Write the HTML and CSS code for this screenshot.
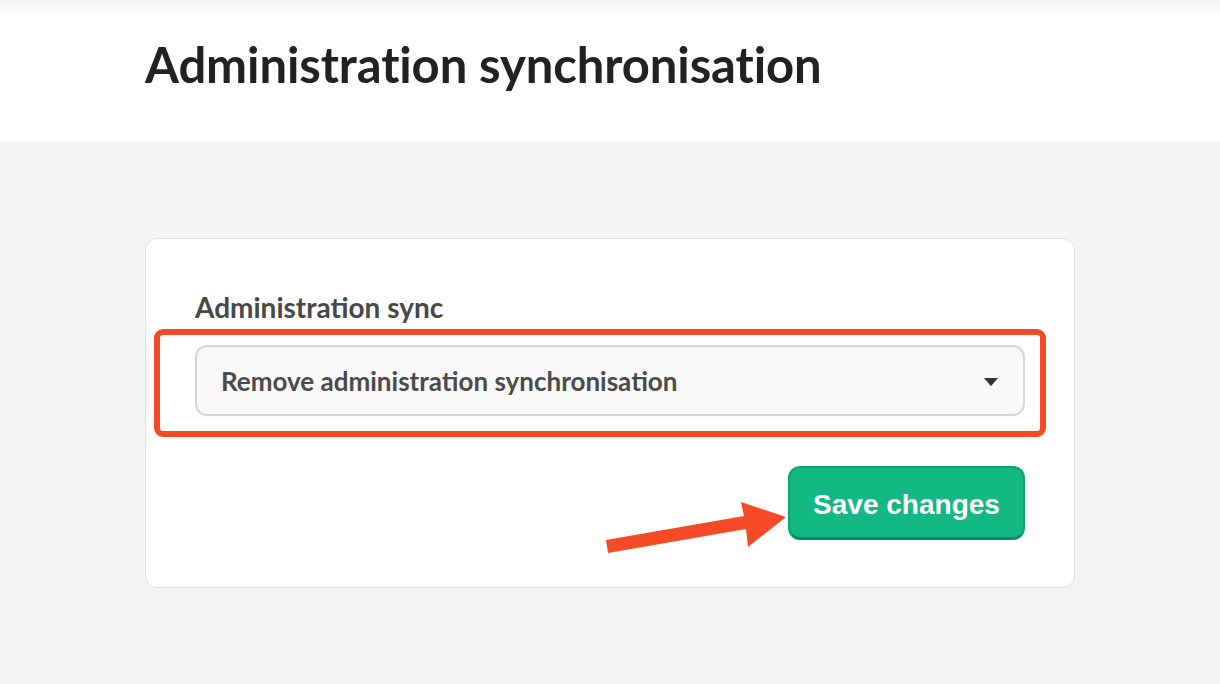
FILE: index.html
```html
<!DOCTYPE html>
<html>
<head>
<meta charset="utf-8">
<link rel="stylesheet" href="styles.css">
</head>
<body>
<header class="top">
  <h1 class="title">Administration synchronisation</h1>
</header>
<main class="main">
  <section class="card">
    <label class="label">Administration sync</label>
    <div class="select-wrap">
      <div class="select">
        <span class="select-text">Remove administration synchronisation</span>
        <svg class="caret" width="16" height="10" viewBox="0 0 16 10"><path d="M1 1 H15 L8.6 8.4 Q8 9 7.4 8.4 Z" fill="#333"/></svg>
      </div>
      <div class="highlight"></div>
    </div>
    <div class="actions">
      <button class="save">Save changes</button>
    </div>
  </section>
  <svg class="arrow" width="200" height="60" viewBox="0 0 200 60">
    <polygon points="0,35 138,11 135,-3 180,12 142,42 140,24 2,48" fill="#f44a25"/>
  </svg>
</main>
</body>
</html>
```
FILE: styles.css
```css
html, body {
  margin: 0;
  padding: 0;
}
body {
  font-family: Lato, "Noto Sans", sans-serif;
  background: #f4f4f4;
  width: 1220px;
  height: 684px;
  overflow: hidden;
  position: relative;
}
.top {
  background: linear-gradient(#f1f1f1 0, #ffffff 16px);
  height: 141px;
  box-sizing: border-box;
  padding-left: 145px;
  padding-top: 34px;
}
.title {
  margin: 0;
  font-size: 49px;
  font-weight: 700;
  color: #222;
  line-height: 60px;
  letter-spacing: -0.1px;
}
.main {
  padding: 97px 145px 0 145px;
  position: relative;
}
.card {
  width: 930px;
  box-sizing: border-box;
  background: #fff;
  border: 1px solid #e1e1e1;
  border-radius: 12px;
  padding: 50px 49px 46px 49px;
  height: 350px;
}
.label {
  display: block;
  font-size: 28px;
  font-weight: 700;
  color: #484848;
  line-height: 36px;
  margin-bottom: 20px;
}
.select-wrap {
  position: relative;
}
.select {
  height: 71px;
  box-sizing: border-box;
  border: 2px solid #d6d6d6;
  border-radius: 12px;
  background: #f9f9f9;
  display: flex;
  align-items: center;
  justify-content: space-between;
  padding: 0 24px 0 24px;
}
.select-text {
  font-size: 26px;
  font-weight: 700;
  color: #4a4a4a;
}
.caret {
  display: block;
  margin-top: 2px;
}
.highlight {
  position: absolute;
  left: -41px;
  top: -16px;
  width: 892px;
  height: 108px;
  box-sizing: border-box;
  border: 6px solid #f44a25;
  border-radius: 9px;
}
.actions {
  display: flex;
  justify-content: flex-end;
  margin-top: 50px;
}
.save {
  width: 237px;
  height: 74px;
  background: #14b882;
  border: 2px solid #10a272;
  border-bottom: 3px solid #0d8a60;
  border-radius: 12px;
  color: #fff;
  font-family: "Liberation Sans", Arial, sans-serif;
  font-weight: 700;
  font-size: 28px;
  padding: 4px 0 0 0;
}
.arrow {
  position: absolute;
  left: 606px;
  top: 364px;
  overflow: visible;
}
```
